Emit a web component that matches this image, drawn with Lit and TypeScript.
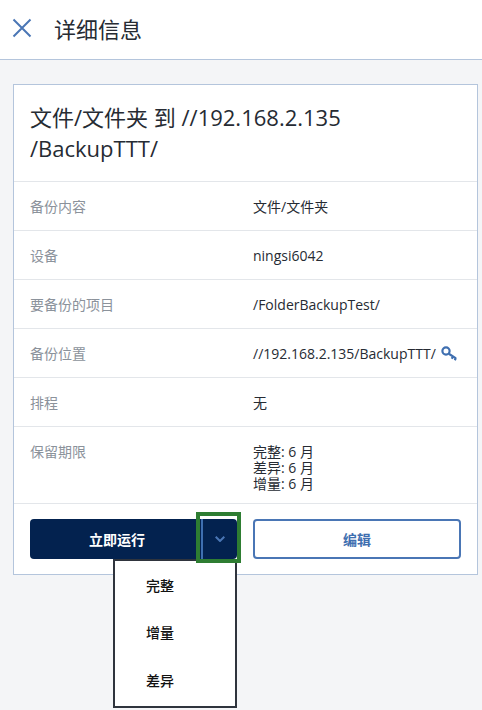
import { LitElement, html, css } from "lit";
import { customElement } from "lit/decorators.js";

@customElement("app-root")
export class AppRoot extends LitElement {
  static styles = css`
    :host { display: block; width: 482px; height: 710px; overflow: hidden; background: #f4f5f7; font-family: "Open Sans", "Noto Sans CJK SC", sans-serif; color: #1c1c1c; }
    .header { height: 59px; box-sizing: content-box; background: #fff; border-bottom: 1px solid #b4c5dc; display: flex; align-items: center; padding-left: 12px; gap: 22px; }
    .header svg { display: block; margin-top: -3px; }
    .header h1 { margin: 0 0 4px 0; font-size: 22px; font-weight: 400; color: #262b33; }
    .card { margin: 24px 4px 0 13px; background: #fff; border: 1px solid #b4c5dc; }
    .title { padding: 17px 16px; font-size: 22px; line-height: 31px; border-bottom: 1px solid #e3e6ea; color: #262b33; }
    .row { display: grid; grid-template-columns: 223px 1fr; padding: 0 16px; min-height: 48px; align-items: center; border-bottom: 1px solid #e3e6ea; font-size: 14px; }
    .row .k { color: #8b929b; }
    .row .v { color: #262b33; display: flex; align-items: center; gap: 5px; }
    .row.tall { align-items: start; min-height: 77px; padding-top: 17px; box-sizing: border-box; line-height: 16px; }
    .row.tall .v { display: block; }
    .actions { display: flex; gap: 16px; padding: 15px 16px; position: relative; }
    .split { width: 207px; height: 40px; background: #03224f; border-radius: 4px; display: flex; color: #fff; font-size: 14px; font-weight: 700; }
    .run { width: 171px; box-sizing: border-box; padding-left: 3px; display: flex; align-items: center; justify-content: center; }
    .sep { width: 2px; background: #3f6fb0; }
    .caret { flex: 1; display: flex; align-items: center; justify-content: center; }
    .focus { position: absolute; left: 182px; top: 8px; width: 45px; height: 51px; box-sizing: border-box; border: 4px solid #2e7d32; pointer-events: none; z-index: 3; }
    .edit { width: 208px; height: 40px; box-sizing: border-box; border: 2px solid #4a76b5; border-radius: 4px; background: #fff; color: #3f6fb0; font-size: 14px; font-weight: 700; display: flex; align-items: center; justify-content: center; }
    .menu { position: absolute; left: 99px; top: 55px; width: 124px; height: 149px; box-sizing: border-box; background: #fff; border: 2px solid #2f343d; z-index: 2; }
    .menu div { height: 47.5px; display: flex; align-items: center; padding-left: 31px; font-size: 14px; font-weight: 500; color: #111; }
  `;

  render() {
    return html`
      <div class="header">
        <svg width="20" height="20" viewBox="0 0 20 20"><path d="M1.5 1.5 L18.5 18.5 M18.5 1.5 L1.5 18.5" stroke="#4a76b5" stroke-width="2" fill="none"/></svg>
        <h1>详细信息</h1>
      </div>
      <div class="card">
        <div class="title">文件/文件夹 到 //192.168.2.135<br />/BackupTTT/</div>
        <div class="row"><div class="k">备份内容</div><div class="v">文件/文件夹</div></div>
        <div class="row"><div class="k">设备</div><div class="v">ningsi6042</div></div>
        <div class="row"><div class="k">要备份的项目</div><div class="v">/FolderBackupTest/</div></div>
        <div class="row"><div class="k">备份位置</div><div class="v">//192.168.2.135/BackupTTT/
          <svg width="16" height="15" viewBox="0 0 16 15"><circle cx="5" cy="5" r="3.6" fill="none" stroke="#3f6fb0" stroke-width="2.2"/><path d="M7.8 7.8 L15 12.4 M12 10.2 L10.8 12.8 M14.8 12 L13.8 14.2" stroke="#3f6fb0" stroke-width="2.2" fill="none"/></svg></div></div>
        <div class="row"><div class="k">排程</div><div class="v">无</div></div>
        <div class="row tall"><div class="k">保留期限</div><div class="v">完整: 6 月<br />差异: 6 月<br />增量: 6 月</div></div>
        <div class="actions">
          <div class="split">
            <div class="run">立即运行</div>
            <div class="sep"></div>
            <div class="caret"><svg width="10" height="6" viewBox="0 0 10 6"><path d="M0.7 0.7 L5 5 L9.3 0.7" stroke="#4a76b5" stroke-width="2" fill="none"/></svg></div>
          </div>
          <div class="focus"></div>
          <div class="edit">编辑</div>
          <div class="menu"><div>完整</div><div>增量</div><div>差异</div></div>
        </div>
      </div>
    `;
  }
}
